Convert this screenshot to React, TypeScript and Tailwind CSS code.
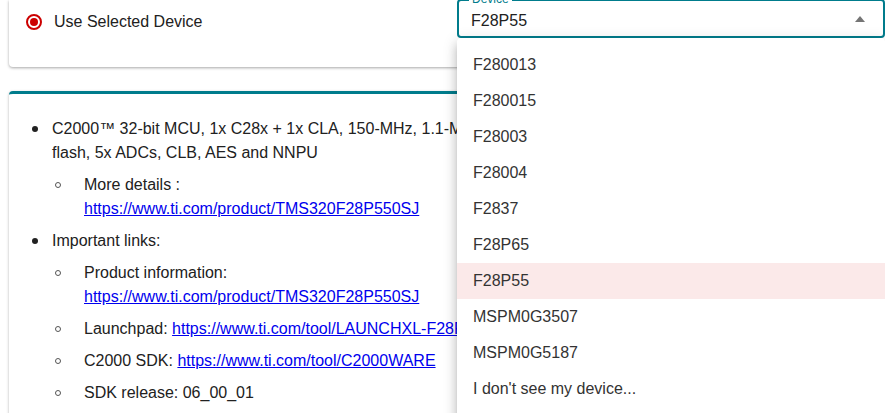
import React from 'react';

const devices = [
  'F280013',
  'F280015',
  'F28003',
  'F28004',
  'F2837',
  'F28P65',
  'F28P55',
  'MSPM0G3507',
  'MSPM0G5187',
  "I don't see my device...",
];

const Disc = () => (
  <span className="w-[20px] shrink-0 flex items-center h-[24px]">
    <span className="block w-[6px] h-[6px] rounded-full bg-[#212121]" />
  </span>
);

const Circle = () => (
  <span className="w-[32px] shrink-0 flex items-center h-[24px] pl-[3px]">
    <span className="block w-[6px] h-[6px] rounded-full border border-[#555]" />
  </span>
);

const Link: React.FC<{ href: string }> = ({ href }) => (
  <a href={href} className="text-[#0000ee] underline">
    {href}
  </a>
);

export default function App() {
  const selected = 'F28P55';

  return (
    <div className="relative w-[885px] h-[413px] overflow-hidden bg-white text-[16px] text-[#212121] font-['Liberation_Sans',Arial,sans-serif]">
      {/* top card */}
      <div className="ml-[9px] h-[67px] bg-white rounded-b-[4px] shadow-[0_1px_3px_rgba(0,0,0,0.35)] flex items-start">
        <div className="flex items-center gap-[12px] pl-[17px] pt-[14px]">
          <span className="w-[16px] h-[16px] rounded-full border-2 border-[#cc0000] flex items-center justify-center">
            <span className="block w-[8px] h-[8px] rounded-full bg-[#cc0000]" />
          </span>
          <span className="leading-[16px]">Use Selected Device</span>
        </div>
        <div className="ml-auto mt-[-1px] w-[428px] h-[39px] border-2 border-[#007c8c] rounded-[4px] relative flex items-center pl-[12px] pr-[12px] pt-[4px]">
          <span className="absolute left-[10px] top-[-9px] bg-white px-[3px] text-[12px] leading-[14px] text-[#007c8c]">Device</span>
          <span className="flex-1">{selected}</span>
          <svg width="10" height="6" viewBox="0 0 10 6" className="mr-[6px] mb-[4px]">
            <path d="M0 6 L5 0 L10 6 Z" fill="#757575" />
          </svg>
        </div>
      </div>

      {/* details card */}
      <div className="ml-[9px] mt-[24px] bg-white border-t-[3px] border-[#007c8c] rounded-t-[4px] shadow-[0_1px_3px_rgba(0,0,0,0.3)] pt-[23px] pb-[40px] pl-[23px] leading-[24px]">
        <ul className="flex flex-col gap-[8px]">
          <li className="flex">
            <Disc />
            <div className="flex flex-col gap-[8px]">
              <div className="w-[440px]">
                C2000™ 32-bit MCU, 1x C28x + 1x CLA, 150-MHz, 1.1-MB flash, 5x ADCs, CLB, AES and NNPU
              </div>
              <div className="flex">
                <Circle />
                <div>
                  More details :<br />
                  <Link href="https://www.ti.com/product/TMS320F28P550SJ" />
                </div>
              </div>
            </div>
          </li>
          <li className="flex">
            <Disc />
            <div className="flex flex-col gap-[8px]">
              <div>Important links:</div>
              <div className="flex">
                <Circle />
                <div>
                  Product information:<br />
                  <Link href="https://www.ti.com/product/TMS320F28P550SJ" />
                </div>
              </div>
              <div className="flex whitespace-nowrap">
                <Circle />
                <div>
                  Launchpad: <Link href="https://www.ti.com/tool/LAUNCHXL-F28P55X" />
                </div>
              </div>
              <div className="flex">
                <Circle />
                <div>
                  C2000 SDK: <Link href="https://www.ti.com/tool/C2000WARE" />
                </div>
              </div>
              <div className="flex">
                <Circle />
                <div>SDK release: 06_00_01</div>
              </div>
            </div>
          </li>
        </ul>
      </div>

      {/* dropdown menu */}
      <div className="absolute left-[457px] top-[38px] w-[428px] bottom-[-20px] bg-white rounded-[4px] shadow-[0_5px_5px_-3px_rgba(0,0,0,0.2),0_8px_10px_1px_rgba(0,0,0,0.14),0_3px_14px_2px_rgba(0,0,0,0.12)] pt-[9px]">
        {devices.map((d) => (
          <div
            key={d}
            className={`h-[36px] flex items-center pl-[16px] text-[#333] ${d === selected ? 'bg-[#fbe9e9]' : ''}`}
          >
            {d}
          </div>
        ))}
      </div>
    </div>
  );
}
